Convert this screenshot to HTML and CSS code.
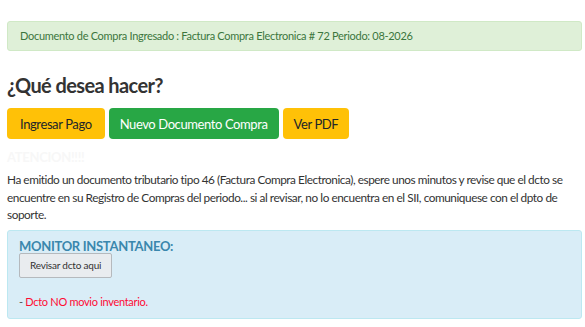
FILE: index.html
```html
<!DOCTYPE html>
<html>

<head>
	<title>Documento de Compra</title>
	<link rel="stylesheet" href="styles.css">
</head>

<body>
	<div class="alerta">Documento de Compra Ingresado : Factura Compra Electronica # 72 Periodo: 08-2026</div>

	<h2>¿Qué desea hacer?</h2>

	<div class="botones">
		<button class="btn amarillo pago">Ingresar Pago</button>
		<button class="btn verde">Nuevo Documento Compra</button>
		<button class="btn amarillo">Ver PDF</button>
	</div>

	<h4 class="atencion">ATENCION!!!!</h4>
	<p class="aviso">Ha emitido un documento tributario tipo 46 (Factura Compra Electronica), espere unos minutos y revise que el dcto se encuentre en su Registro de Compras del periodo... si al revisar, no lo encuentra en el SII, comuniquese con el dpto de soporte.</p>

	<!-- monitor -->
	<div class="monitor">
		<h4>MONITOR INSTANTANEO:</h4>
		<button class="revisar">Revisar dcto aqui</button>
		<p class="estado">- <span class="rojo">Dcto NO movio inventario.</span></p>
	</div>
</body>

</html>
```

FILE: styles.css
```css
body {
	margin: 0;
	padding: 21px 3px 0 7px;
	font-family: Lato, "Open Sans", sans-serif;
	color: #333;
	font-size: 12px;
	letter-spacing: -0.3px;
}

/* mensaje de exito */
.alerta {
	background-color: #dff0d8;
	border: 1px solid #d0e9c6;
	border-radius: 3px;
	color: #3c763d;
	padding: 7px 12px;
	font-size: 11px;
	line-height: 14px;
}

h2 {
	font-size: 20px;
	font-weight: bold;
	margin: 22px 0 11px 0;
	line-height: 24px;
	letter-spacing: -0.6px;
}

.botones {
	display: flex;
	gap: 4px;
}

.btn {
	font-family: inherit;
	font-size: 13px;
	letter-spacing: -0.4px;
	border: 0;
	border-radius: 4px;
	padding: 0 11px;
	height: 31px;
}

.pago {
	padding: 0 13px;
}

.amarillo {
	background-color: #ffc107;
	color: #212529;
}

.verde {
	background-color: #28a745;
	color: #fff;
}

.atencion {
	color: #f7f7f7;
	font-size: 13px;
	margin: 10px 0 6px 0;
	line-height: 16px;
}

.aviso {
	margin: 0 0 6px 0;
	line-height: 17.5px;
	font-size: 11.8px;
	letter-spacing: -0.45px;
}

.monitor {
	background-color: #d9edf7;
	border: 1px solid #bce8f1;
	border-radius: 3px;
	padding: 8px 11px 10px 11px;
}

.monitor h4 {
	color: #3a87ad;
	font-size: 13px;
	margin: 0;
	line-height: 14px;
}

.revisar {
	font-family: inherit;
	font-size: 10px;
	letter-spacing: -0.2px;
	background-color: #e9ecef;
	border: 1px solid #b5b9bd;
	border-radius: 2px;
	padding: 0 10px;
	height: 25px;
	color: #333;
}

.estado {
	margin: 17px 0 0 0;
	font-size: 11px;
	color: #555;
}

.rojo {
	color: #ff0a33;
}
```
